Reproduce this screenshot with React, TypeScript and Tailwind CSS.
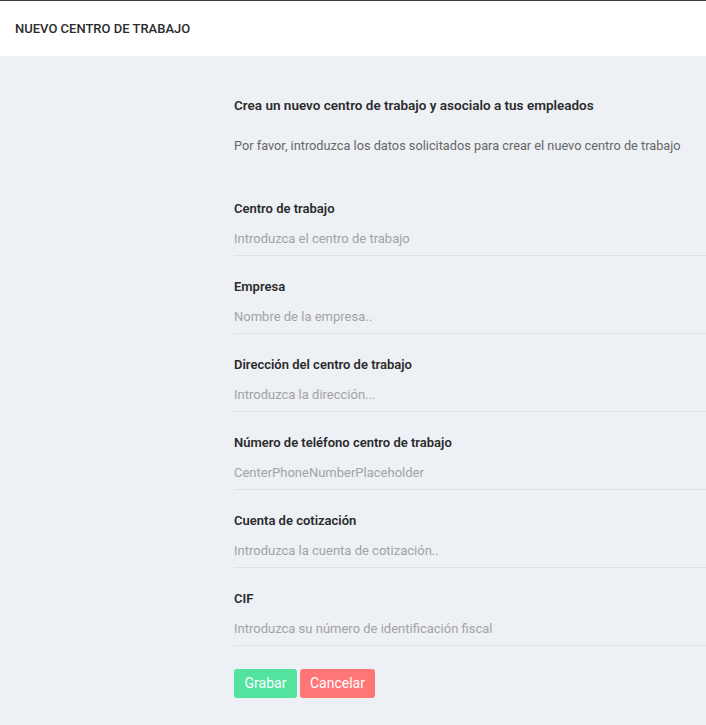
import React from "react";

const fields = [
  { label: "Centro de trabajo", placeholder: "Introduzca el centro de trabajo" },
  { label: "Empresa", placeholder: "Nombre de la empresa.." },
  { label: "Dirección del centro de trabajo", placeholder: "Introduzca la dirección..." },
  { label: "Número de teléfono centro de trabajo", placeholder: "CenterPhoneNumberPlaceholder" },
  { label: "Cuenta de cotización", placeholder: "Introduzca la cuenta de cotización.." },
  { label: "CIF", placeholder: "Introduzca su número de identificación fiscal" },
];

export default function App() {
  return (
    <div
      className="min-h-[725px] w-full bg-[#edf0f5] text-[#2b2b2b]"
      style={{ fontFamily: "Roboto, 'Noto Sans', sans-serif" }}
    >
      {/* Header */}
      <div className="h-[56px] border-t border-[#3a3a3a] bg-white flex items-center px-[15px]">
        <span className="text-[13px] font-medium uppercase text-[#2b2b2b]">Nuevo centro de trabajo</span>
      </div>

      {/* Form */}
      <div className="ml-[234px] pt-[41px] pb-[27px]">
        <h2 className="text-[13.5px] font-semibold leading-4 text-[#2b2b2b] whitespace-nowrap">
          Crea un nuevo centro de trabajo y asocialo a tus empleados
        </h2>
        <p className="mt-[25px] text-[12.75px] leading-4 text-[#666] whitespace-nowrap">
          Por favor, introduzca los datos solicitados para crear el nuevo centro de trabajo
        </p>

        <div className="mt-[47px] flex flex-col gap-[23px]">
          {fields.map((f) => (
            <div key={f.label} className="flex flex-col">
              <label className="text-[13px] font-semibold leading-4 text-[#2b2b2b]">{f.label}</label>
              <input
                className="h-[34px] mt-[5px] w-full bg-transparent border-b border-[#dde1e6] text-[13px] outline-none placeholder:text-[#a3a3a3]"
                placeholder={f.placeholder}
              />
            </div>
          ))}
        </div>

        <div className="mt-[23px] flex gap-[3px]">
          <button className="h-[29px] w-[63px] rounded-[3px] bg-[#52e3a0] text-white text-[14px]">
            Grabar
          </button>
          <button className="h-[29px] w-[75px] rounded-[3px] bg-[#ff7676] text-white text-[14px]">
            Cancelar
          </button>
        </div>
      </div>
    </div>
  );
}
